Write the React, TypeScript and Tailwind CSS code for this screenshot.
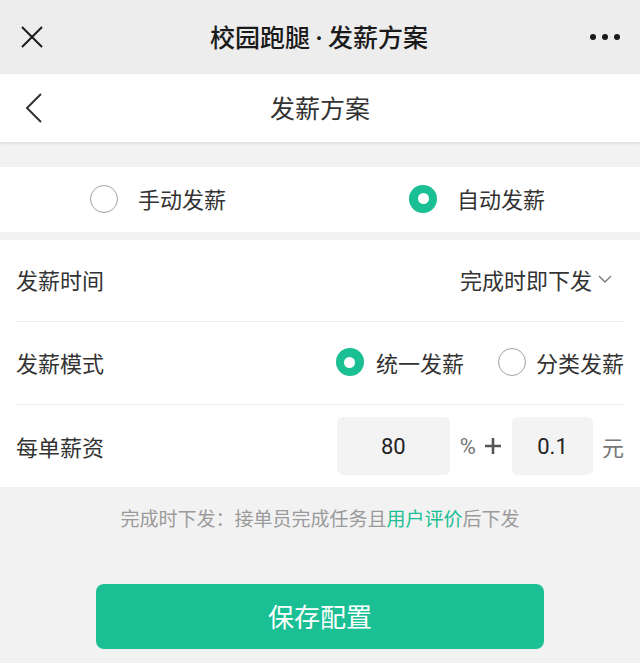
import React, { useState } from 'react'

const font = { fontFamily: '"Noto Sans CJK SC", "Noto Sans", sans-serif' }

function Radio({ checked }: { checked: boolean }) {
  return checked ? (
    <span className="flex h-[28px] w-[28px] items-center justify-center rounded-full bg-[#1abf94]">
      <span className="h-[11px] w-[11px] rounded-full bg-white" />
    </span>
  ) : (
    <span className="h-[28px] w-[28px] rounded-full border-[1.5px] border-[#a0a0a0] bg-white" />
  )
}

export default function App() {
  const [payMode, setPayMode] = useState<'manual' | 'auto'>('auto')
  const [splitMode, setSplitMode] = useState<'unified' | 'category'>('unified')
  const [percent, setPercent] = useState('80')
  const [fixed, setFixed] = useState('0.1')

  return (
    <div className="flex h-[663px] w-full flex-col overflow-hidden bg-[#f2f2f2]" style={font}>
      {/* wechat top bar */}
      <div className="flex h-[74px] items-center justify-between bg-[#ededed] px-[20px]">
        <svg width="24" height="24" viewBox="0 0 24 24" className="text-[#1a1a1a]">
          <path d="M2 2 L22 22 M22 2 L2 22" stroke="currentColor" strokeWidth="2" fill="none" />
        </svg>
        <h1 className="ml-[4px] flex items-center text-[25px] font-medium text-[#1a1a1a]">
          <span>校园跑腿</span>
          <span className="px-[1px] text-[16px]">•</span>
          <span>发薪方案</span>
        </h1>
        <div className="flex w-[30px] items-center justify-between">
          <span className="h-[6px] w-[6px] rounded-full bg-[#1a1a1a]" />
          <span className="h-[6px] w-[6px] rounded-full bg-[#1a1a1a]" />
          <span className="h-[6px] w-[6px] rounded-full bg-[#1a1a1a]" />
        </div>
      </div>

      {/* page nav */}
      <div className="relative flex h-[68px] items-center justify-center bg-white shadow-[0_1px_3px_rgba(0,0,0,0.12)]">
        <svg width="18" height="30" viewBox="0 0 18 30" className="absolute left-[25px] top-[19px] text-[#333]">
          <path d="M16 1 L2 15 L16 29" stroke="currentColor" strokeWidth="2" fill="none" />
        </svg>
        <span className="text-[25px] text-[#333]">发薪方案</span>
      </div>

      {/* pay type */}
      <div className="mt-[25px] flex h-[65px] items-center bg-white pb-[2px]">
        <button onClick={() => setPayMode('manual')} className="ml-[90px] flex items-center gap-[20px]">
          <Radio checked={payMode === 'manual'} />
          <span className="text-[22px] text-[#333]">手动发薪</span>
        </button>
        <button onClick={() => setPayMode('auto')} className="ml-[183px] flex items-center gap-[20px]">
          <Radio checked={payMode === 'auto'} />
          <span className="text-[22px] text-[#333]">自动发薪</span>
        </button>
      </div>

      {/* settings */}
      <div className="mt-[8px] bg-white px-[16px]">
        <div className="flex h-[82px] items-center justify-between border-b border-[#ebebeb] pb-[3px]">
          <span className="text-[22px] text-[#333]">发薪时间</span>
          <div className="mr-[12px] flex items-center gap-[6px]">
            <span className="text-[22px] text-[#333]">完成时即下发</span>
            <svg width="14" height="10" viewBox="0 0 14 10" className="text-[#777]">
              <path d="M1 2 L7 8 L13 2" stroke="currentColor" strokeWidth="1.3" fill="none" />
            </svg>
          </div>
        </div>
        <div className="flex h-[83px] items-center justify-between border-b border-[#ebebeb] pb-[2px]">
          <span className="text-[22px] text-[#333]">发薪模式</span>
          <div className="flex items-center">
            <button onClick={() => setSplitMode('unified')} className="flex items-center gap-[12px]">
              <Radio checked={splitMode === 'unified'} />
              <span className="text-[22px] text-[#333]">统一发薪</span>
            </button>
            <button onClick={() => setSplitMode('category')} className="ml-[34px] flex items-center gap-[10px]">
              <Radio checked={splitMode === 'category'} />
              <span className="text-[22px] text-[#333]">分类发薪</span>
            </button>
          </div>
        </div>
        <div className="flex h-[82px] items-center justify-between">
          <span className="text-[22px] text-[#333]">每单薪资</span>
          <div className="flex items-center">
            <input
              value={percent}
              onChange={(e) => setPercent(e.target.value)}
              className="h-[58px] w-[113px] rounded-[6px] bg-[#f3f3f3] text-center text-[22px] text-[#222] outline-none"
              style={{ fontFamily: 'Roboto, "Noto Sans", sans-serif' }}
            />
            <span className="ml-[10px] text-[22px] text-[#777]" style={{ fontFamily: 'Roboto, sans-serif' }}>%</span>
            <svg width="18" height="18" viewBox="0 0 18 18" className="ml-[8px] text-[#555]">
              <path d="M9 1 V17 M1 9 H17" stroke="currentColor" strokeWidth="2.6" fill="none" />
            </svg>
            <input
              value={fixed}
              onChange={(e) => setFixed(e.target.value)}
              className="ml-[10px] h-[58px] w-[81px] rounded-[6px] bg-[#f3f3f3] text-center text-[22px] text-[#222] outline-none"
              style={{ fontFamily: 'Roboto, "Noto Sans", sans-serif' }}
            />
            <span className="ml-[9px] text-[22px] text-[#777]">元</span>
          </div>
        </div>
      </div>

      <p className="mt-[17px] text-center text-[19px] text-[#9a9a9a]">
        完成时下发：接单员完成任务且<span className="text-[#1abf94]">用户评价</span>后下发
      </p>

      <button className="mx-auto mt-[51px] flex h-[65px] w-[448px] items-center justify-center rounded-[8px] bg-[#1abf94] pb-[2px] text-[26px] text-white">
        保存配置
      </button>
    </div>
  )
}
